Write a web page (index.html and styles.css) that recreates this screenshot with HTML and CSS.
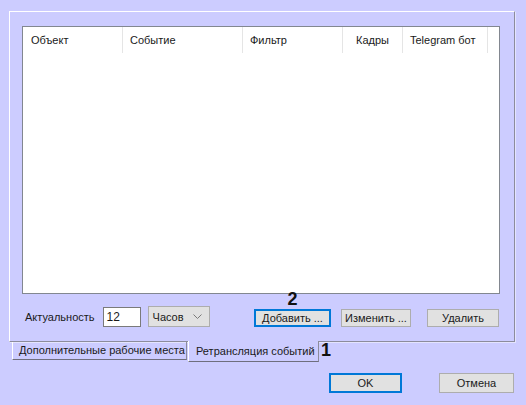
FILE: index.html
```html
<!DOCTYPE html>
<html lang="ru">
<head>
<meta charset="utf-8">
<title>Ретрансляция событий</title>
<link rel="stylesheet" href="styles.css">
</head>
<body>
<div class="panel">
  <div class="list">
    <div class="list-header">
      <div class="col col-obj">Объект</div>
      <div class="col col-event">Событие</div>
      <div class="col col-filter">Фильтр</div>
      <div class="col col-frames">Кадры</div>
      <div class="col col-bot">Telegram бот</div>
    </div>
  </div>
  <div class="controls">
    <span class="label">Актуальность</span>
    <div class="input">12</div>
    <div class="select">
      <span>Часов</span>
      <svg class="chev" width="9" height="6" viewBox="0 0 9 6"><polyline points="0.5,0.5 4.5,4.5 8.5,0.5" fill="none" stroke="#7a7a7a" stroke-width="1"/></svg>
    </div>
    <div class="btn-wrap btn-add-wrap">
      <span class="mark mark-2">2</span>
      <div class="btn btn-focus btn-add">Добавить ...</div>
    </div>
    <div class="btn btn-edit">Изменить ...</div>
    <div class="btn btn-del">Удалить</div>
  </div>
</div>
<div class="tabs">
  <div class="tab">Дополнительные рабочие места</div>
  <div class="tab tab-active">Ретрансляция событий</div>
  <span class="mark mark-1">1</span>
</div>
<div class="footer">
  <div class="btn btn-focus btn-ok">OK</div>
  <div class="btn btn-cancel">Отмена</div>
</div>
</body>
</html>
```
FILE: styles.css
```css
html, body {
  margin: 0;
  padding: 0;
}
body {
  width: 526px;
  height: 405px;
  overflow: hidden;
  background: #ccccff;
  font-family: "Liberation Sans", Arial, sans-serif;
  font-size: 11px;
  color: #1a1a1a;
}
.panel {
  box-sizing: border-box;
  margin: 11px 0 0 9px;
  width: 506px;
  height: 331px;
  padding: 14px 14px 0 12px;
  border-left: 1px solid #ffffff;
  border-top: 1px solid #ffffff;
  border-right: 1px solid #8c8c9c;
  border-bottom: 1px solid #8c8c9c;
  box-shadow: 1px 1px 0 #e4e4ff;
}
.list {
  box-sizing: border-box;
  width: 478px;
  height: 268px;
  background: #ffffff;
  border: 1px solid #828790;
}
.list-header {
  display: flex;
  height: 26px;
}
.col {
  box-sizing: border-box;
  height: 26px;
  line-height: 26px;
  border-right: 1px solid #e5e5e5;
  white-space: nowrap;
}
.col-obj { width: 100px; padding-left: 8px; }
.col-event { width: 120px; padding-left: 7px; }
.col-filter { width: 100px; padding-left: 7px; }
.col-frames { width: 60px; text-align: center; }
.col-bot { width: 85px; padding-left: 7px; }

.controls {
  display: flex;
  align-items: center;
  height: 21px;
  margin-top: 12px;
}
.label {
  margin-left: 3px;
}
.input {
  box-sizing: border-box;
  margin-left: 8px;
  width: 38px;
  height: 20px;
  line-height: 18px;
  padding-left: 3px;
  background: #ffffff;
  border: 1px solid #7a7a7a;
  font-size: 12px;
}
.select {
  box-sizing: border-box;
  margin-left: 7px;
  width: 62px;
  height: 21px;
  display: flex;
  align-items: center;
  justify-content: space-between;
  padding: 1px 7px 0 4px;
  background: #e1e1e1;
  border: 1px solid #adadad;
}
.chev {
  display: block;
}
.btn {
  box-sizing: border-box;
  height: 18px;
  line-height: 16px;
  text-align: center;
  background: #e1e1e1;
  border: 1px solid #adadad;
  white-space: nowrap;
}
.btn-focus {
  border: 1px solid #0078d7;
  box-shadow: inset 0 0 0 1px #0078d7;
}
.btn-wrap {
  position: relative;
}
.btn-add-wrap {
  margin-left: auto;
  margin-top: 3px;
}
.btn-add { width: 77px; }
.btn-edit { width: 70px; margin-left: 10px; margin-top: 3px; }
.btn-del { width: 72px; margin-left: 16px; margin-right: 1px; margin-top: 3px; }

.mark {
  font-size: 18px;
  font-weight: bold;
  line-height: 18px;
  color: #111;
}
.mark-2 {
  position: absolute;
  left: 50%;
  top: -19px;
  transform: translateX(-50%);
}

.tabs {
  display: flex;
  align-items: flex-start;
  margin-left: 12px;
  height: 20px;
}
.tab {
  box-sizing: border-box;
  width: 175px;
  height: 18px;
  line-height: 16px;
  padding-left: 6px;
  border-left: 1px solid #ffffff;
  border-right: 1px solid #8c8c9c;
  border-bottom: 1px solid #6e6e7e;
  white-space: nowrap;
}
.tab-active {
  width: 131px;
  height: 21px;
  margin-top: -1px;
  margin-left: 1px;
  line-height: 20px;
  padding-left: 7px;
  background: #ccccff;
}
.mark-1 {
  margin-left: 2px;
  margin-top: -1px;
}

.footer {
  display: flex;
  justify-content: flex-end;
  gap: 37px;
  margin-top: 11px;
  padding-right: 12px;
}
.btn-ok {
  width: 73px;
  height: 20px;
  line-height: 18px;
}
.btn-cancel {
  width: 75px;
  height: 20px;
  line-height: 18px;
}
```
